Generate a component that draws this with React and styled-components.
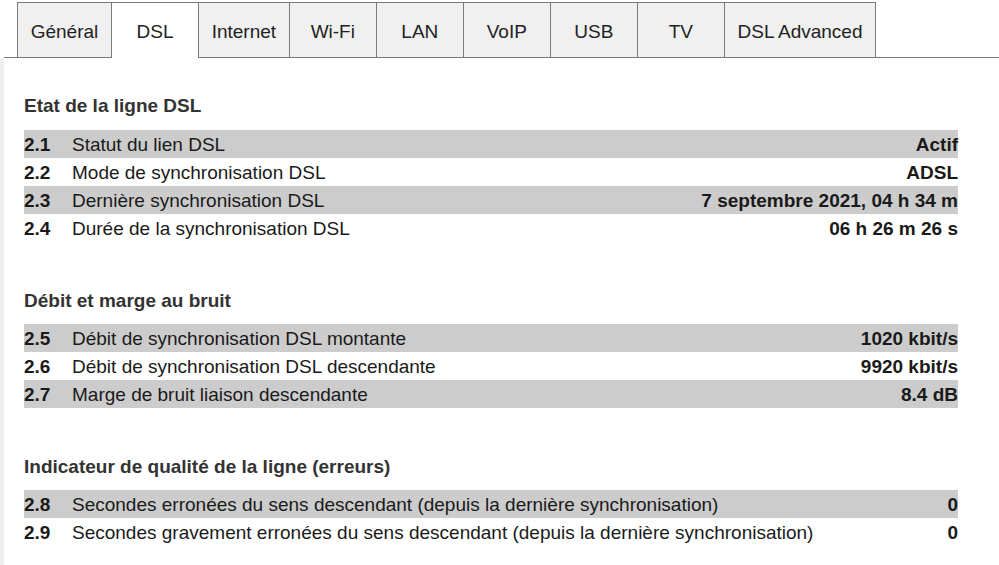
import React from 'react'
import styled, { createGlobalStyle } from 'styled-components';

const GlobalStyle = createGlobalStyle`
  html, body {
    margin: 0;
    padding: 0;
    background: #ffffff;
  }
  body {
    font-family: "Liberation Sans", Arial, sans-serif;
    font-size: 19px;
    color: #1a1a1a;
  }
`;

const Page = styled.div`
  display: flex;
  flex-direction: column;
  min-height: 100vh;
`;

const TabBar = styled.div`
  display: flex;
  align-items: flex-end;
  height: 58px;
  box-sizing: border-box;
  margin-left: 4px;
  padding-left: 13px;
  border-bottom: 1px solid #7a7a7a;
`;

const Tab = styled.div`
  box-sizing: border-box;
  min-width: 87px;
  height: ${p => (p.$active ? '56px' : '55px')};
  margin-bottom: ${p => (p.$active ? '-1px' : '0')};
  padding: ${p => (p.$active ? '2px 12.7px 0' : '3px 12.7px 0')};
  display: flex;
  align-items: center;
  justify-content: center;
  background: ${p => (p.$active ? '#ffffff' : '#f0f0f0')};
  border-top: 1px solid #7a7a7a;
  border-left: 1px solid #7a7a7a;
  color: #222;
  white-space: nowrap;
  &:last-child {
    border-right: 1px solid #7a7a7a;
  }
`;

const Content = styled.div`
  flex: 1;
  border-left: 4px solid #efefef;
  padding: 33px 41px 0 20px;
`;

const Section = styled.section`
  & + & {
    margin-top: 43px;
  }
`;

const Heading = styled.h2`
  margin: 0 0 11px;
  height: 28px;
  line-height: 30px;
  font-size: 19px;
  font-weight: bold;
  color: #333;
  section + section & {
    line-height: 32px;
  }
`;

const Row = styled.div`
  display: flex;
  align-items: center;
  height: 28px;
  padding-top: 1px;
  box-sizing: border-box;
  background: ${p => (p.$shaded ? '#cccccc' : 'transparent')};
  white-space: nowrap;
`;

const Num = styled.span`
  width: 48px;
  flex: none;
  font-weight: bold;
`;

const Label = styled.span`
  flex: 1;
`;

const Value = styled.span`
  font-weight: bold;
  text-align: right;
`;

const tabs = ['Général', 'DSL', 'Internet', 'Wi-Fi', 'LAN', 'VoIP', 'USB', 'TV', 'DSL Advanced'];

const sections = [
  {
    title: 'Etat de la ligne DSL',
    rows: [
      ['2.1', 'Statut du lien DSL', 'Actif'],
      ['2.2', 'Mode de synchronisation DSL', 'ADSL'],
      ['2.3', 'Dernière synchronisation DSL', '7 septembre 2021, 04 h 34 m'],
      ['2.4', 'Durée de la synchronisation DSL', '06 h 26 m 26 s'],
    ],
  },
  {
    title: 'Débit et marge au bruit',
    rows: [
      ['2.5', 'Débit de synchronisation DSL montante', '1020 kbit/s'],
      ['2.6', 'Débit de synchronisation DSL descendante', '9920 kbit/s'],
      ['2.7', 'Marge de bruit liaison descendante', '8.4 dB'],
    ],
  },
  {
    title: 'Indicateur de qualité de la ligne (erreurs)',
    rows: [
      ['2.8', 'Secondes erronées du sens descendant (depuis la dernière synchronisation)', '0'],
      ['2.9', 'Secondes gravement erronées du sens descendant (depuis la dernière synchronisation)', '0'],
    ],
  },
];

export default function App() {
  return (
    <>
      <GlobalStyle />
      <Page>
        <TabBar>
          {tabs.map(t => (
            <Tab key={t} $active={t === 'DSL'}>{t}</Tab>
          ))}
        </TabBar>
        <Content>
          {sections.map(s => (
            <Section key={s.title}>
              <Heading>{s.title}</Heading>
              {s.rows.map(([n, label, value], i) => (
                <Row key={n} $shaded={i % 2 === 0}>
                  <Num>{n}</Num>
                  <Label>{label}</Label>
                  <Value>{value}</Value>
                </Row>
              ))}
            </Section>
          ))}
        </Content>
      </Page>
    </>
  );
};
